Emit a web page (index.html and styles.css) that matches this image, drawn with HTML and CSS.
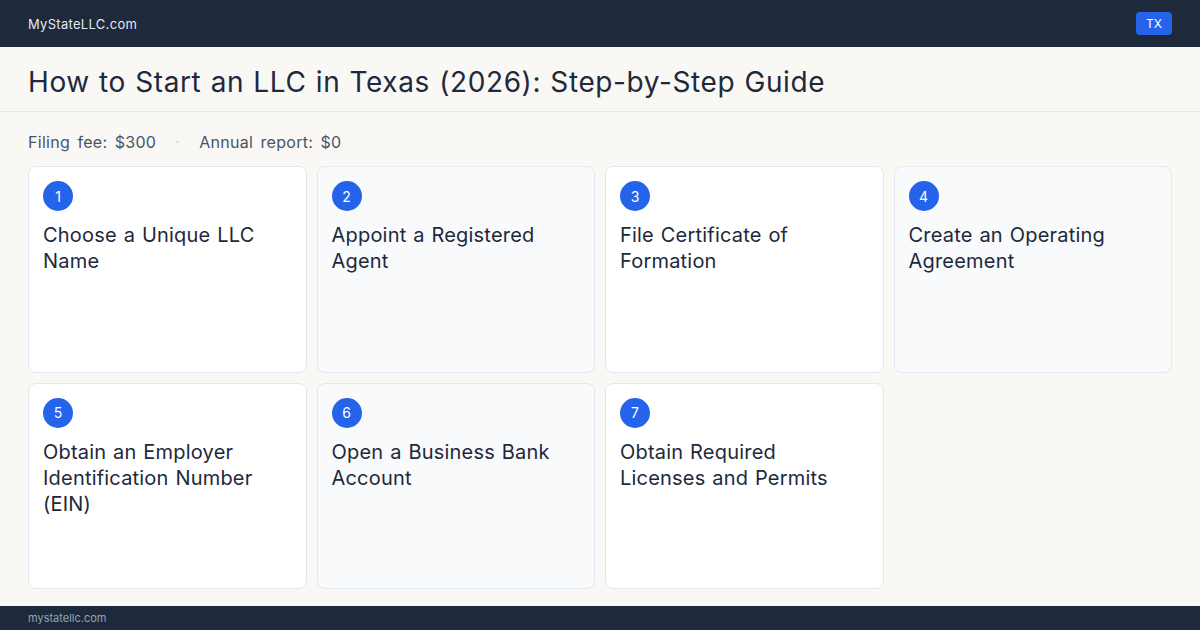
FILE: index.html
```html
<!DOCTYPE html>
<html lang="en">
<head>
    <meta charset="UTF-8">
    <meta name="viewport" content="width=device-width, initial-scale=1.0">
    <title>How to Start an LLC in Texas (2026)</title>
    <link rel="stylesheet" href="styles.css">
</head>
<body>

<header class="topbar">
    <span class="brand">MyStateLLC.com</span>
    <span class="state-badge">TX</span>
</header>

<div class="title-band">
    <h1>How to Start an LLC in Texas (2026): Step-by-Step Guide</h1>
</div>

<main class="content">
    <p class="fees">
        <span>Filing fee: $300</span>
        <span class="sep">·</span>
        <span>Annual report: $0</span>
    </p>

    <div class="steps">
        <div class="step">
            <span class="num">1</span>
            <h2>Choose a Unique LLC Name</h2>
        </div>
        <div class="step alt">
            <span class="num">2</span>
            <h2>Appoint a Registered Agent</h2>
        </div>
        <div class="step">
            <span class="num">3</span>
            <h2>File Certificate of Formation</h2>
        </div>
        <div class="step alt">
            <span class="num">4</span>
            <h2>Create an Operating Agreement</h2>
        </div>
        <div class="step">
            <span class="num">5</span>
            <h2>Obtain an Employer Identification Number (EIN)</h2>
        </div>
        <div class="step alt">
            <span class="num">6</span>
            <h2>Open a Business Bank Account</h2>
        </div>
        <div class="step">
            <span class="num">7</span>
            <h2>Obtain Required Licenses and Permits</h2>
        </div>
    </div>
</main>

<footer class="bottombar">mystatellc.com</footer>

</body>
</html>
```

FILE: styles.css
```css
/* page frame: top bar, title, cards, footer */
body {
    font-family: 'Inter', 'Liberation Sans', sans-serif;
    margin: 0;
    height: 100vh;
    display: flex;
    flex-direction: column;
    background-color: #f9f8f5;
    color: #1e293b;
}
.topbar {
    height: 47px;
    flex-shrink: 0;
    display: flex;
    align-items: center;
    justify-content: space-between;
    padding: 0 28px;
    background-color: #1e293b;
}
.brand {
    font-size: 13px;
    color: #e2e8f0;
    letter-spacing: 0.3px;
}
.state-badge {
    background-color: #2563eb;
    color: #fff;
    font-size: 12px;
    line-height: 15px;
    padding: 4px 10px;
    border-radius: 4px;
}
.title-band {
    height: 65px;
    flex-shrink: 0;
    display: flex;
    align-items: center;
    padding: 5px 28px 0;
    box-sizing: border-box;
    border-bottom: 1px solid #e2e8f0;
}
h1 {
    margin: 0;
    font-size: 28px;
    font-weight: 400;
    letter-spacing: 0.6px;
    word-spacing: 0.8px;
    color: #1e293b;
}
.content {
    flex: 1;
    display: flex;
    flex-direction: column;
    padding: 20px 28px 17px;
    min-height: 0;
}
.fees {
    margin: 0 0 14px;
    font-size: 16px;
    line-height: 20px;
    letter-spacing: 0.3px;
    word-spacing: 2.5px;
    color: #475569;
    display: flex;
    gap: 19px;
}
.fees .sep {
    color: #cbd5e1;
}
.steps {
    flex: 1;
    display: grid;
    grid-template-columns: repeat(4, 1fr);
    grid-template-rows: 1fr 1fr;
    gap: 10px;
}
.step {
    background-color: #fff;
    border: 1px solid #e2e8f0;
    border-radius: 8px;
    padding: 14px 20px 14px 14px;
}
.step.alt {
    background-color: #f8fafc;
}
.num {
    display: flex;
    align-items: center;
    justify-content: center;
    width: 30px;
    height: 30px;
    border-radius: 50%;
    background-color: #2563eb;
    color: #fff;
    font-size: 14px;
}
.step h2 {
    margin: 11px 0 0;
    font-size: 20px;
    font-weight: 400;
    line-height: 26px;
    letter-spacing: 0.2px;
    word-spacing: 1px;
    color: #1e293b;
}
.bottombar {
    height: 24px;
    flex-shrink: 0;
    display: flex;
    align-items: center;
    padding: 0 28px;
    background-color: #1e293b;
    color: #94a3b8;
    font-size: 11px;
}
```
